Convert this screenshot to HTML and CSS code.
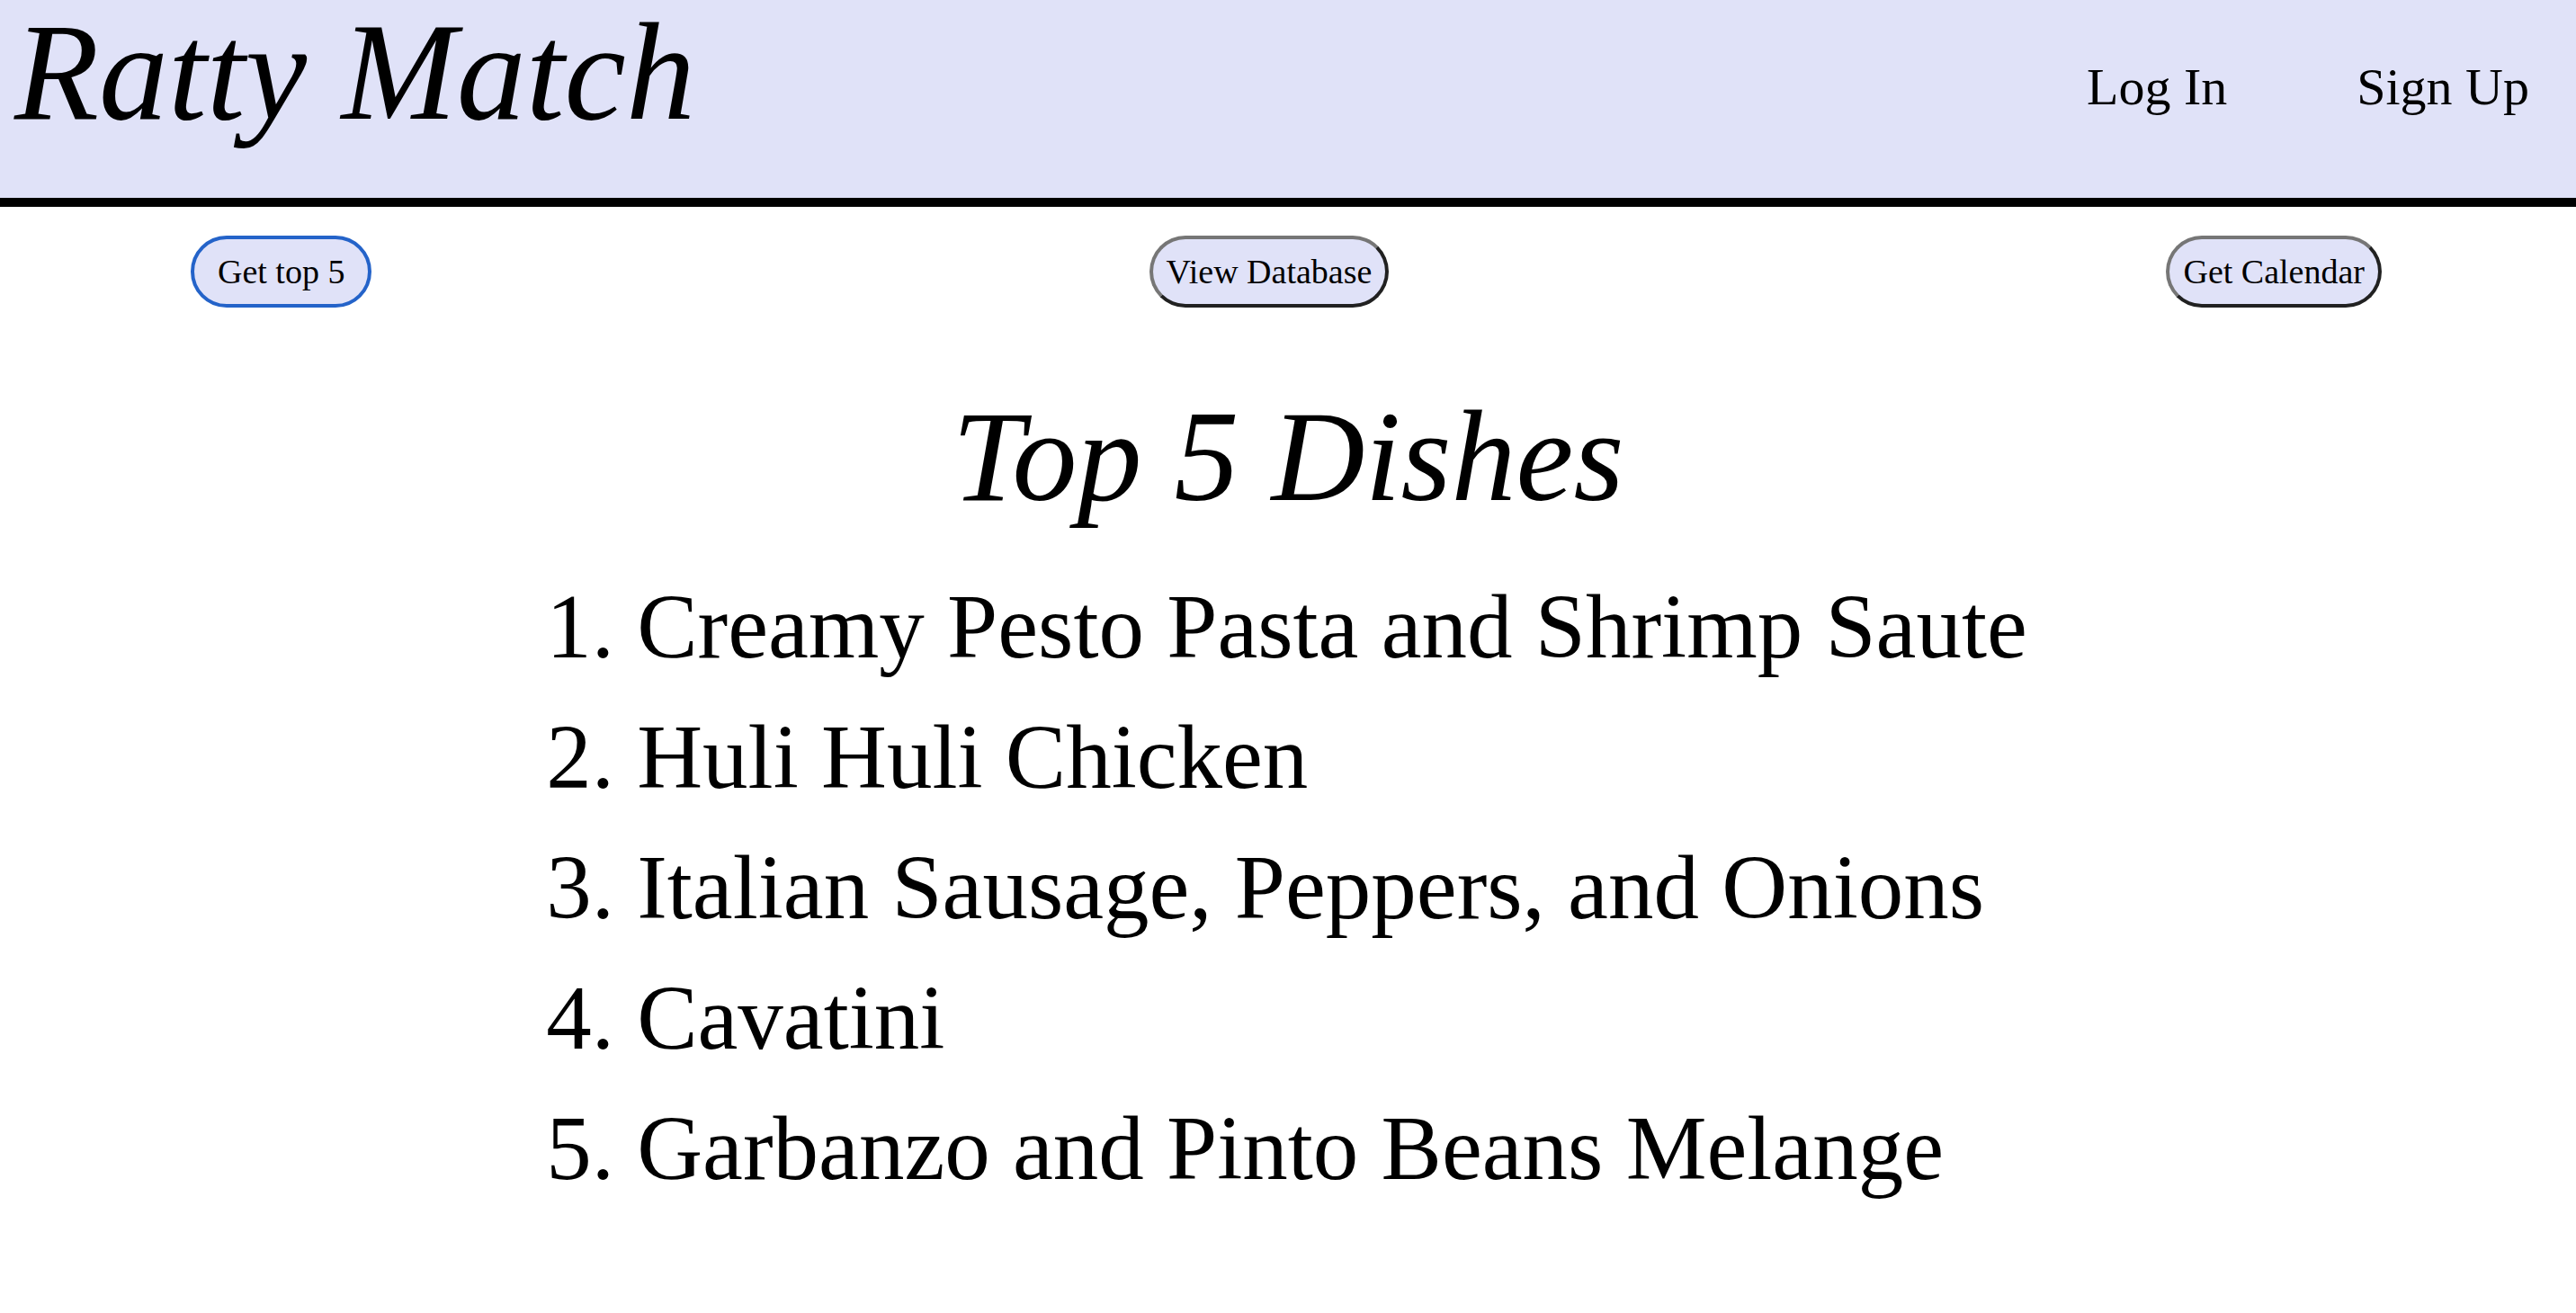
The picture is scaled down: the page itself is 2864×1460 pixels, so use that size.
FILE: index.html
```html
<!DOCTYPE html>
<html lang="en">
<head>
<meta charset="utf-8">
<title>Ratty Match</title>
<link rel="stylesheet" href="styles.css">
</head>
<body>
<header class="header">
  <h1 class="brand">Ratty Match</h1>
  <nav class="account">
    <a href="#login">Log In</a>
    <a href="#signup">Sign Up</a>
  </nav>
</header>
<div class="actions">
  <button class="pill pill-active" type="button">Get top 5</button>
  <button class="pill" type="button">View Database</button>
  <button class="pill" type="button">Get Calendar</button>
</div>
<main class="dishes">
  <h2 class="title">Top 5 Dishes</h2>
  <ol class="list">
    <li>Creamy Pesto Pasta and Shrimp Saute</li>
    <li>Huli Huli Chicken</li>
    <li>Italian Sausage, Peppers, and Onions</li>
    <li>Cavatini</li>
    <li>Garbanzo and Pinto Beans Melange</li>
  </ol>
</main>
</body>
</html>
```
FILE: styles.css
```css
* { box-sizing: border-box; }
body {
  margin: 0;
  background: #fff;
  color: #000;
  font-family: "Liberation Serif", "Times New Roman", serif;
}
.header {
  display: flex;
  justify-content: space-between;
  align-items: flex-start;
  padding: 0 52px 60px 16px;
  background: #e0e2f8;
  border-bottom: 10px solid #000;
}
.brand, .title {
  margin: 0;
  font-family: "Apple Chancery", "Z003", "URW Chancery L", "Liberation Serif", cursive;
  font-style: italic;
  font-weight: 400;
  line-height: 160px;
}
.brand { font-size: 154px; }
.title { font-size: 144px; text-align: center; }
.account {
  display: flex;
  gap: 144px;
  padding-top: 62px;
  font-size: 58px;
  line-height: 70px;
}
.account a { color: inherit; text-decoration: none; }
.actions {
  display: flex;
  justify-content: space-between;
  padding: 32px 216px 0 212px;
}
.pill {
  height: 80px;
  padding: 0 15px;
  border: 4px solid;
  border-color: #767676 #212121 #212121 #767676;
  border-radius: 40px;
  background: #e0e2f8;
  color: #000;
  font-family: inherit;
  font-size: 38px;
}
.pill-active {
  padding: 0 26px;
  border-color: #2463c9;
}
.dishes {
  width: fit-content;
  margin: 0 auto;
  padding-top: 86px;
}
.list {
  margin: 0;
  padding: 37px 0 0 98px;
  font-size: 101px;
  line-height: 145px;
}
```
